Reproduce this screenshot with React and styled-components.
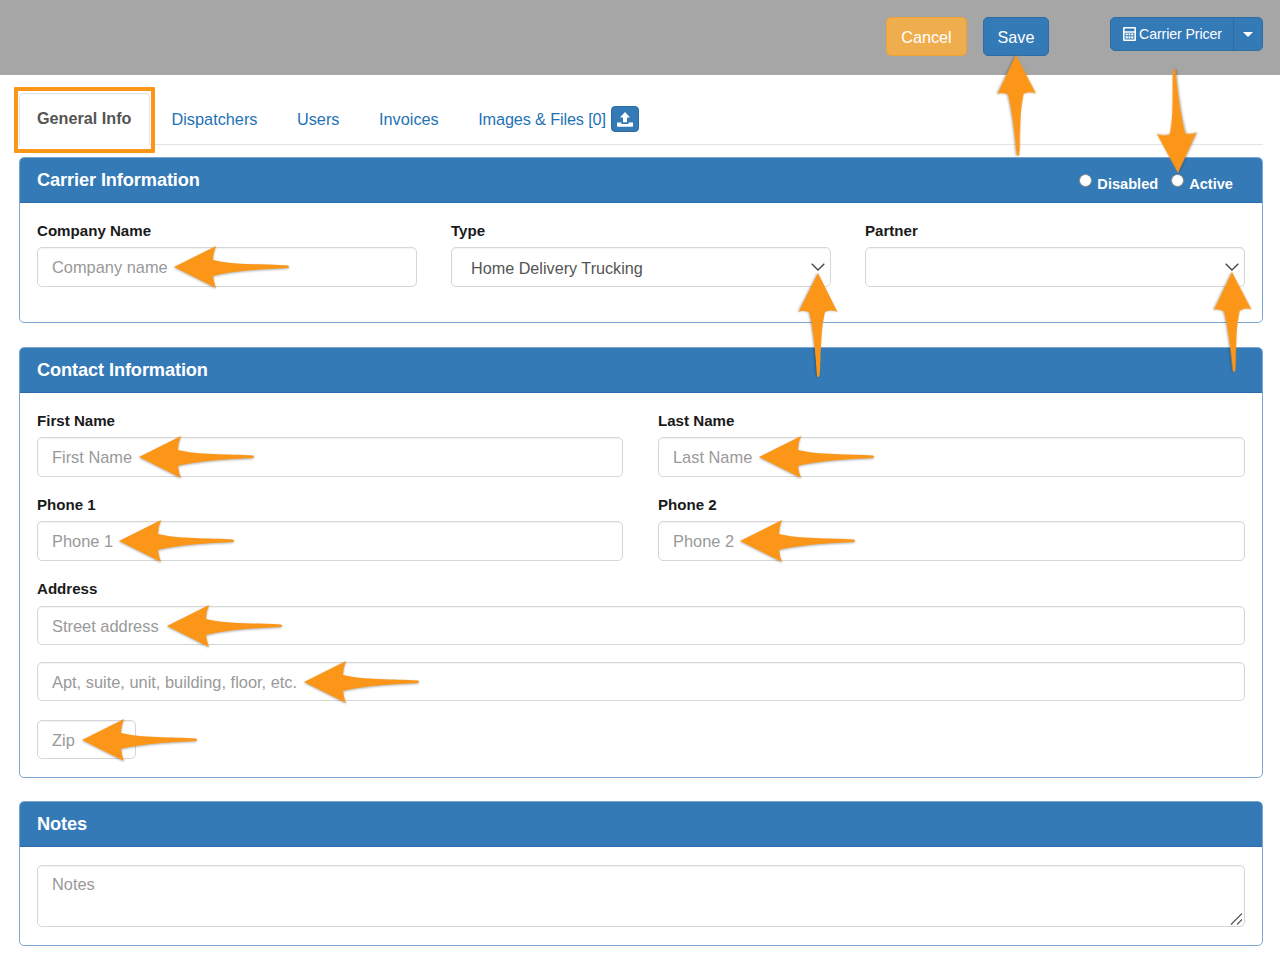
import styled, { createGlobalStyle } from 'styled-components'

const GlobalStyle = createGlobalStyle`
    html, body{
        margin: 0;
        padding: 0;
        background: #fff;
    }
    *{
        box-sizing: border-box;
    }
`;

export default function App(){
    return (
    <Page>
        <GlobalStyle/>
        <TopBar>
            <ActionButton $variant="cancel">Cancel</ActionButton>
            <ActionButton $variant="save">Save</ActionButton>
            <SplitButton>
                <SplitMain>
                    <CalculatorIcon/>
                    Carrier Pricer
                </SplitMain>
                <SplitCaret><span/></SplitCaret>
            </SplitButton>
        </TopBar>
        <Content>
            <Tabs>
                <ActiveTab>
                    General Info
                    <Highlight/>
                </ActiveTab>
                {tabsArray.map((label, i)=>(
                    <Tab key={label} $tight={i===tabsArray.length-1}>{label}</Tab>
                ))}
                <UploadButton><UploadIcon/></UploadButton>
            </Tabs>

            <Panel>
                <PanelHeader>
                    <PanelTitle>Carrier Information</PanelTitle>
                    <RadioGroup>
                        <RadioLabel><Radio type="radio" name="status"/>Disabled</RadioLabel>
                        <RadioLabel><Radio type="radio" name="status"/>Active</RadioLabel>
                    </RadioGroup>
                </PanelHeader>
                <CarrierBody>
                    <Field>
                        <Label>Company Name</Label>
                        <CompanyInput placeholder="Company name"/>
                    </Field>
                    <Field>
                        <Label>Type</Label>
                        <SelectBox>
                            <Select defaultValue="home">
                                <option value="home">Home Delivery Trucking</option>
                            </Select>
                            <Chevron/>
                        </SelectBox>
                    </Field>
                    <Field>
                        <Label>Partner</Label>
                        <SelectBox>
                            <Select defaultValue="">
                                <option value=""></option>
                            </Select>
                            <Chevron/>
                        </SelectBox>
                    </Field>
                </CarrierBody>
            </Panel>

            <Panel $gap={24}>
                <PanelHeader>
                    <PanelTitle>Contact Information</PanelTitle>
                </PanelHeader>
                <ContactBody>
                    <TwoColumns>
                        <Field>
                            <Label>First Name</Label>
                            <Input placeholder="First Name"/>
                        </Field>
                        <Field>
                            <Label>Last Name</Label>
                            <Input placeholder="Last Name"/>
                        </Field>
                        <Field>
                            <Label>Phone 1</Label>
                            <Input placeholder="Phone 1"/>
                        </Field>
                        <Field>
                            <Label>Phone 2</Label>
                            <Input placeholder="Phone 2"/>
                        </Field>
                    </TwoColumns>
                    <AddressField>
                        <AddressLabel>Address</AddressLabel>
                        <Input placeholder="Street address"/>
                        <Input placeholder="Apt, suite, unit, building, floor, etc."/>
                        <ZipInput placeholder="Zip"/>
                    </AddressField>
                </ContactBody>
            </Panel>

            <Panel $gap={23}>
                <NotesHeader>
                    <PanelTitle>Notes</PanelTitle>
                </NotesHeader>
                <NotesBody>
                    <NotesBox>
                        <Notes placeholder="Notes"/>
                        <ResizeGrip/>
                    </NotesBox>
                </NotesBody>
            </Panel>
        </Content>

        {arrowsArray.map((arrow, i)=>(
            <Arrow key={i} {...arrow}/>
        ))}
    </Page>
    );
}

// tip of the arrow is at x,y. angle 0 points left, 90 up, -90 down
function Arrow({x, y, angle=0, len=116, half=21}){
    const d = `M0 23 L${half*2} ${23-half} Q${half*2-3} 9 39 16 C58 21 90 20 ${len-2} 21.5 Q${len} 23 ${len-2} 24 C90 25 58 27 39 32 Q${half*2-2} 39 ${half*2} ${23+half} Z`;
    return (
        <ArrowSvg $x={x} $y={y} $angle={angle} width={len} height={46} viewBox={`0 0 ${len} 46`}>
            <path d={d} fill="#fb9618"/>
        </ArrowSvg>
    );
}

function CalculatorIcon(){
    return (
        <IconSvg width="13" height="14" viewBox="0 0 13 14">
            <path fill="#fff" fillRule="evenodd" d="M1 0h11a1 1 0 0 1 1 1v12a1 1 0 0 1-1 1H1a1 1 0 0 1-1-1V1a1 1 0 0 1 1-1zm.6 1.6v2.6h9.8V1.6zm0 4.1v6.7h9.8V5.7z"/>
            <path fill="#fff" d="M2.6 6.4h2.2v1.8H2.6zM5.5 6.4h2v1.8h-2zM8.2 6.4h2.2v1.8H8.2zM2.6 9.2h2.2v2.2H2.6zM5.5 9.2h2v2.2h-2zM8.2 9.2h2.2v2.2H8.2z"/>
        </IconSvg>
    );
}

function UploadIcon(){
    return (
        <svg width="16" height="15" viewBox="0 0 16 15">
            <path fill="#fff" d="M8 0l5 5.6H10v4.6H6V5.6H3z"/>
            <path fill="#fff" d="M0 10.6h4.4v1.4h7.2v-1.4H16V14a.7.7 0 0 1-.7.7H.7A.7.7 0 0 1 0 14z"/>
        </svg>
    );
}

function Chevron(){
    return (
        <ChevronSvg width="14" height="8" viewBox="0 0 14 8">
            <path d="M0.7 0.7L7 7L13.3 0.7" fill="none" stroke="#444" strokeWidth="1.3"/>
        </ChevronSvg>
    );
}

function ResizeGrip(){
    return (
        <GripSvg width="13" height="13" viewBox="0 0 13 13">
            <path d="M1 12.5L12 1.5M7 12.5L12 7.5" fill="none" stroke="#555" strokeWidth="1.1"/>
        </GripSvg>
    );
}

//#region DATA
const tabsArray=["Dispatchers","Users","Invoices","Images & Files [0]"];

const arrowsArray=[
    {x:1016, y:55, angle:89, len:102, half:19.5},
    {x:1178, y:173, angle:-92, len:105, half:20},
    {x:818, y:273, angle:90, len:105, half:19.5},
    {x:1232, y:272, angle:89, len:101, half:19},
    {x:174, y:267},
    {x:139, y:457},
    {x:759, y:457},
    {x:119, y:541},
    {x:740, y:541},
    {x:167, y:626},
    {x:304, y:682},
    {x:82, y:740},
];
//#endregion

//#region STYLED COMPONENTS
const Page = styled.div`
    position: relative;
    width: 1280px;
    height: 963px;
    overflow: hidden;
    font-family: "Liberation Sans", Arial, sans-serif;
    color: #333;
`;

const TopBar = styled.div`
    height: 75px;
    background: #a6a6a6;
    display: flex;
    align-items: flex-start;
    padding: 17px 17px 0 0;
    justify-content: flex-end;
`;

const ActionButton = styled.button`
    height: 38.5px;
    width: ${({$variant})=>($variant==="cancel"?`81px`:`66px`)};
    padding: 2px 0 0;
    margin-right: ${({$variant})=>($variant==="cancel"?`16px`:`61px`)};
    font-family: inherit;
    font-size: 16.2px;
    color: #fff;
    border-radius: 5px;
    border: 1px solid ${({$variant})=>($variant==="cancel"?`#eea236`:`#2e6da4`)};
    background: ${({$variant})=>($variant==="cancel"?`#f0ad4e`:`#337ab7`)};
`;

const SplitButton = styled.div`
    display: flex;
    height: 34px;
    width: 153px;
    border: 1px solid #2e6da4;
    border-radius: 5px;
    background: #337ab7;
    color: #fff;
`;

const SplitMain = styled.div`
    width: 123px;
    display: flex;
    align-items: center;
    gap: 3px;
    padding-left: 12px;
    font-size: 14.2px;
    letter-spacing: -0.1px;
    border-right: 1px solid #2e6da4;
`;

const IconSvg = styled.svg`
    flex: none;
`;

const SplitCaret = styled.div`
    flex: 1;
    display: flex;
    align-items: center;
    justify-content: center;
    span{
        width: 0;
        height: 0;
        border-left: 5px solid transparent;
        border-right: 5px solid transparent;
        border-top: 5px solid #fff;
    }
`;

const Content = styled.div`
    padding: 18px 17px 0 19px;
`;

const Tabs = styled.div`
    display: flex;
    align-items: center;
    height: 52px;
    border-bottom: 1px solid #e2e2e2;
    font-size: 16.3px;
`;

const Tab = styled.div`
    height: 100%;
    display: flex;
    align-items: center;
    padding: 1px ${({$tight})=>($tight?`5px`:`18px`)} 0 18px;
    margin-left: 3.5px;
    letter-spacing: ${({$tight})=>($tight?`-0.15px`:`0`)};
    color: #2472b6;
`;

const ActiveTab = styled.div`
    position: relative;
    width: 131px;
    height: 52px;
    padding-left: 17px;
    padding-top: 15.5px;
    font-weight: 700;
    font-size: 16.2px;
    color: #555;
    border: 1px solid #e2e2e2;
    border-bottom-color: #fff;
    border-radius: 5px 5px 0 0;
`;

const Highlight = styled.div`
    position: absolute;
    top: -7px;
    left: -6px;
    width: 141px;
    height: 66px;
    border: 4px solid #fb9618;
    border-radius: 1px;
`;

const UploadButton = styled.div`
    width: 28px;
    height: 26px;
    margin-top: 1px;
    display: flex;
    align-items: center;
    justify-content: center;
    background: #337ab7;
    border: 1px solid #2e6da4;
    border-radius: 4px;
`;

const Panel = styled.section`
    margin-top: ${({$gap})=>($gap?$gap:12)}px;
    border: 1px solid #7ca6d2;
    border-radius: 5px;
    overflow: hidden;
`;

const PanelHeader = styled.div`
    height: 44.5px;
    background: #337ab7;
    border-bottom: 1px solid #2a6cab;
    color: #fff;
    display: flex;
    align-items: center;
    justify-content: space-between;
    padding: 1px 29px 0 17px;
`;

const NotesHeader = styled(PanelHeader)`
    height: 45.5px;
    padding-top: 2px;
`;

const PanelTitle = styled.h3`
    margin: 0;
    font-size: 18.2px;
    font-weight: 700;
    letter-spacing: -0.1px;
`;

const RadioGroup = styled.div`
    display: flex;
    gap: 13px;
    padding-top: 7px;
`;

const RadioLabel = styled.label`
    display: flex;
    align-items: center;
    gap: 5px;
    font-size: 14.6px;
    font-weight: 700;
`;

const Radio = styled.input`
    appearance: none;
    width: 13px;
    height: 13px;
    margin: -7px 0 0 0;
    border-radius: 50%;
    background: #fff;
    border: 1px solid #8a8a8a;
`;

const CarrierBody = styled.div`
    display: grid;
    grid-template-columns: repeat(3, 380px);
    gap: 34px;
    padding: 19.5px 17px 35px;
`;

const ContactBody = styled.div`
    padding: 19.5px 17px 17.5px;
`;

const TwoColumns = styled.div`
    display: grid;
    grid-template-columns: 586px 587px;
    column-gap: 35px;
    row-gap: 19.5px;
`;

const Field = styled.div`
    display: flex;
    flex-direction: column;
`;

const AddressField = styled(Field)`
    margin-top: 19.5px;
    input + input{
        margin-top: 16.5px;
    }
`;

const Label = styled.label`
    height: 25px;
    font-size: 15.1px;
    font-weight: 700;
    color: #1a1a1a;
`;

const AddressLabel = styled(Label)`
    height: 25.7px;
`;

const Input = styled.input`
    height: 39.5px;
    width: 100%;
    padding: 2px 14px 0;
    font-family: inherit;
    font-size: 16.4px;
    color: #555;
    background: #fff;
    border: 1px solid #d6d6d6;
    border-radius: 5px;
    box-shadow: inset 0 1px 1px rgba(0,0,0,.05);
    &::placeholder{
        color: #999;
        opacity: 1;
    }
`;

const CompanyInput = styled(Input)`
    height: 40px;
    padding-top: 0;
`;

const ZipInput = styled(Input)`
    width: 99px;
    && {
        margin-top: 18.5px;
    }
`;

const SelectBox = styled.div`
    position: relative;
`;

const Select = styled.select`
    appearance: none;
    display: block;
    height: 40px;
    width: 100%;
    padding: 2px 19px 0;
    font-family: inherit;
    font-size: 16.2px;
    color: #555;
    background: #fff;
    border: 1px solid #d6d6d6;
    border-radius: 5px;
    box-shadow: inset 0 1px 1px rgba(0,0,0,.05);
`;

const ChevronSvg = styled.svg`
    position: absolute;
    right: 6px;
    top: 16px;
`;

const NotesBody = styled.div`
    padding: 18px 17px 18px;
`;

const NotesBox = styled.div`
    position: relative;
`;

const Notes = styled.textarea`
    display: block;
    width: 100%;
    height: 62px;
    padding: 9px 14px;
    resize: none;
    font-family: inherit;
    font-size: 16.4px;
    color: #555;
    border: 1px solid #d6d6d6;
    border-radius: 5px;
    box-shadow: inset 0 1px 1px rgba(0,0,0,.05);
    &::placeholder{
        color: #999;
        opacity: 1;
    }
`;

const GripSvg = styled.svg`
    position: absolute;
    right: 2px;
    bottom: 2px;
`;

const ArrowSvg = styled.svg`
    position: absolute;
    left: ${({$x})=>$x}px;
    top: ${({$y})=>$y-23}px;
    transform-origin: 0 23px;
    transform: rotate(${({$angle})=>$angle}deg);
    filter: drop-shadow(0 1px 1px rgba(0,0,0,.3));
    overflow: visible;
`;
//#endregion
